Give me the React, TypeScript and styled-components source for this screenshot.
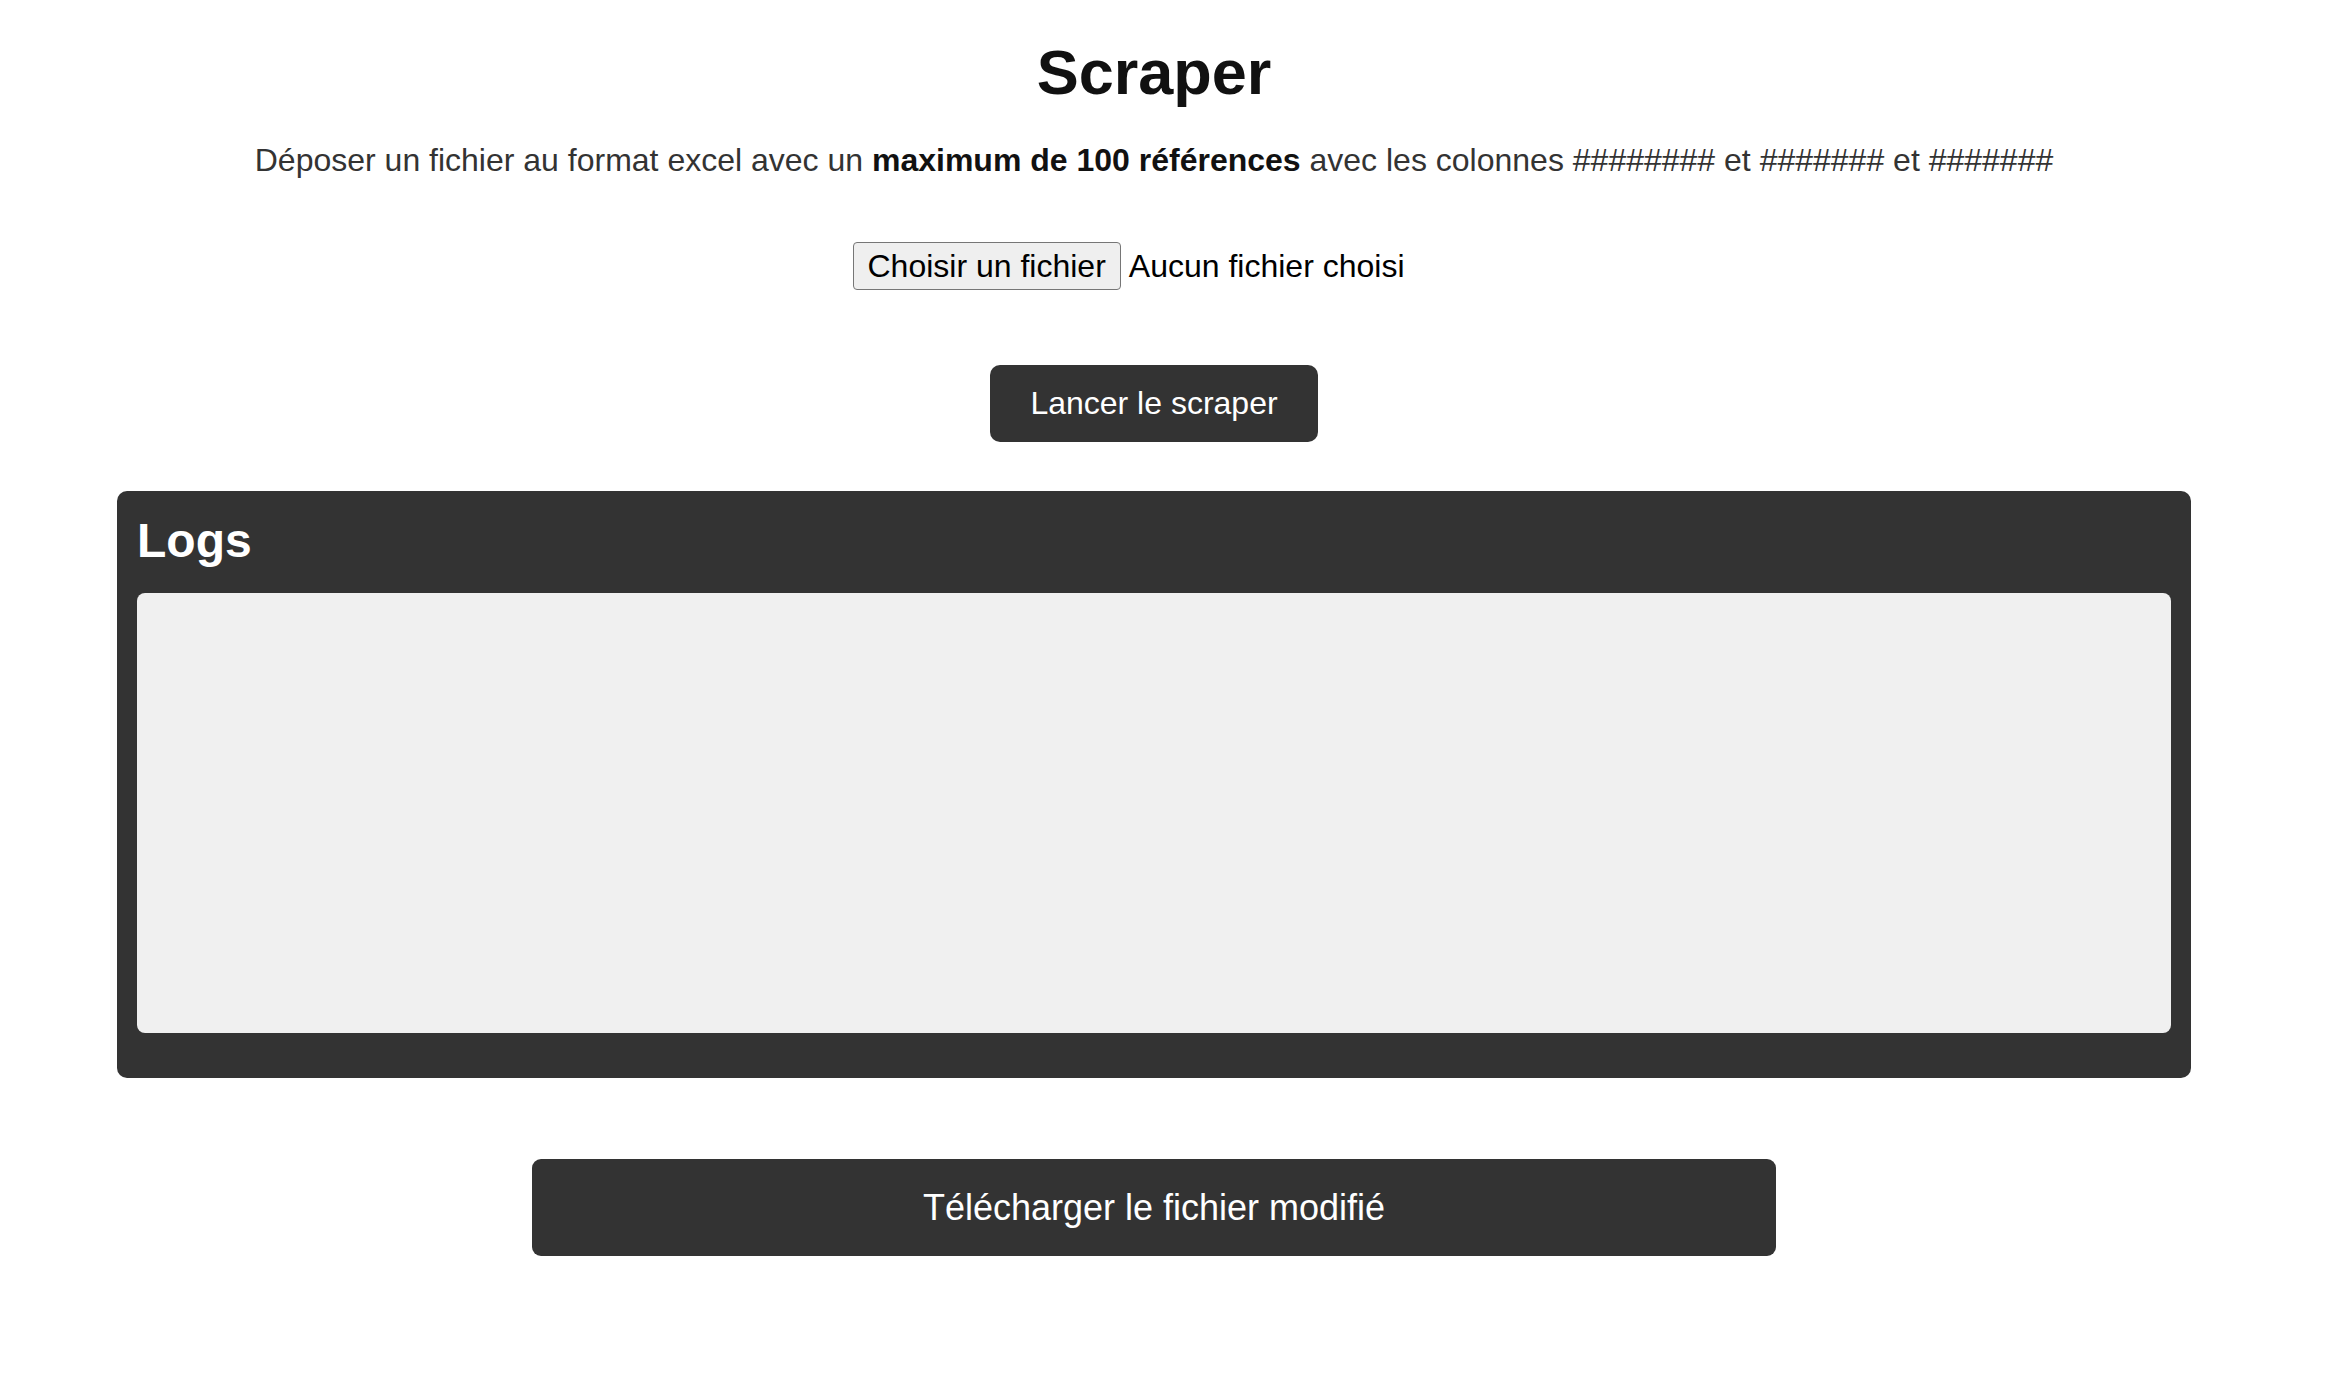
import React from "react";
import styled, { createGlobalStyle } from "styled-components";

const Global = createGlobalStyle`
  html, body { margin: 0; padding: 0; background: #ffffff; }
  body { font-family: "Liberation Sans", Arial, Helvetica, sans-serif; }
`;

const Page = styled.main`
  width: calc(100% - 34px);
  display: flex;
  flex-direction: column;
  align-items: center;
  padding-top: 36px;
`;

const Title = styled.h1`
  margin: 0;
  font-size: 63px;
  line-height: 72px;
  font-weight: 700;
  color: #111111;
`;

const Intro = styled.p`
  margin: 34px 0 0;
  font-size: 32px;
  line-height: 37px;
  color: #333333;
  strong { color: #111111; font-weight: 700; }
`;

const FileRow = styled.div`
  margin-top: 63px;
  padding-right: 51px;
  display: flex;
  align-items: center;
  gap: 8px;
  font-size: 32px;
  color: #000000;
`;

const HiddenInput = styled.input`
  display: none;
`;

const FileButton = styled.label`
  box-sizing: border-box;
  height: 48px;
  padding: 0 14px;
  display: flex;
  align-items: center;
  background: #efefef;
  border: 1.5px solid #767676;
  border-radius: 4px;
  font-size: 32px;
  color: #000000;
  cursor: pointer;
`;

const FileName = styled.span`
  font-size: 32px;
`;

const DarkButton = styled.button<{ $wide?: boolean }>`
  box-sizing: border-box;
  border: none;
  background: #333333;
  color: #ffffff;
  font-family: "Liberation Sans", Arial, Helvetica, sans-serif;
  cursor: pointer;
  border-radius: ${(p) => (p.$wide ? "9px" : "10px")};
  font-size: ${(p) => (p.$wide ? "36px" : "32px")};
  height: ${(p) => (p.$wide ? "97px" : "77px")};
  width: ${(p) => (p.$wide ? "1244px" : "328px")};
`;

const LaunchWrap = styled.div`
  margin-top: 75px;
`;

const LogsPanel = styled.section`
  box-sizing: border-box;
  margin-top: 49px;
  width: 2074px;
  height: 587px;
  background: #333333;
  border-radius: 10px;
  padding: 22px 20px 45px;
  display: flex;
  flex-direction: column;
`;

const LogsTitle = styled.h2`
  margin: 0;
  font-size: 48px;
  line-height: 55px;
  font-weight: 700;
  color: #ffffff;
`;

const LogsBox = styled.div`
  margin-top: 25px;
  flex: 1;
  background: #f0f0f0;
  border-radius: 8px;
`;

const DownloadWrap = styled.div`
  margin-top: 81px;
`;

export default function App() {
  return (
    <>
      <Global />
      <Page>
        <Title>Scraper</Title>
        <Intro>
          Déposer un fichier au format excel avec un <strong>maximum de 100 références</strong> avec les colonnes ######## et ####### et #######
        </Intro>
        <FileRow>
          <HiddenInput type="file" id="file" />
          <FileButton htmlFor="file">Choisir un fichier</FileButton>
          <FileName>Aucun fichier choisi</FileName>
        </FileRow>
        <LaunchWrap>
          <DarkButton>Lancer le scraper</DarkButton>
        </LaunchWrap>
        <LogsPanel>
          <LogsTitle>Logs</LogsTitle>
          <LogsBox />
        </LogsPanel>
        <DownloadWrap>
          <DarkButton $wide>Télécharger le fichier modifié</DarkButton>
        </DownloadWrap>
      </Page>
    </>
  );
}
